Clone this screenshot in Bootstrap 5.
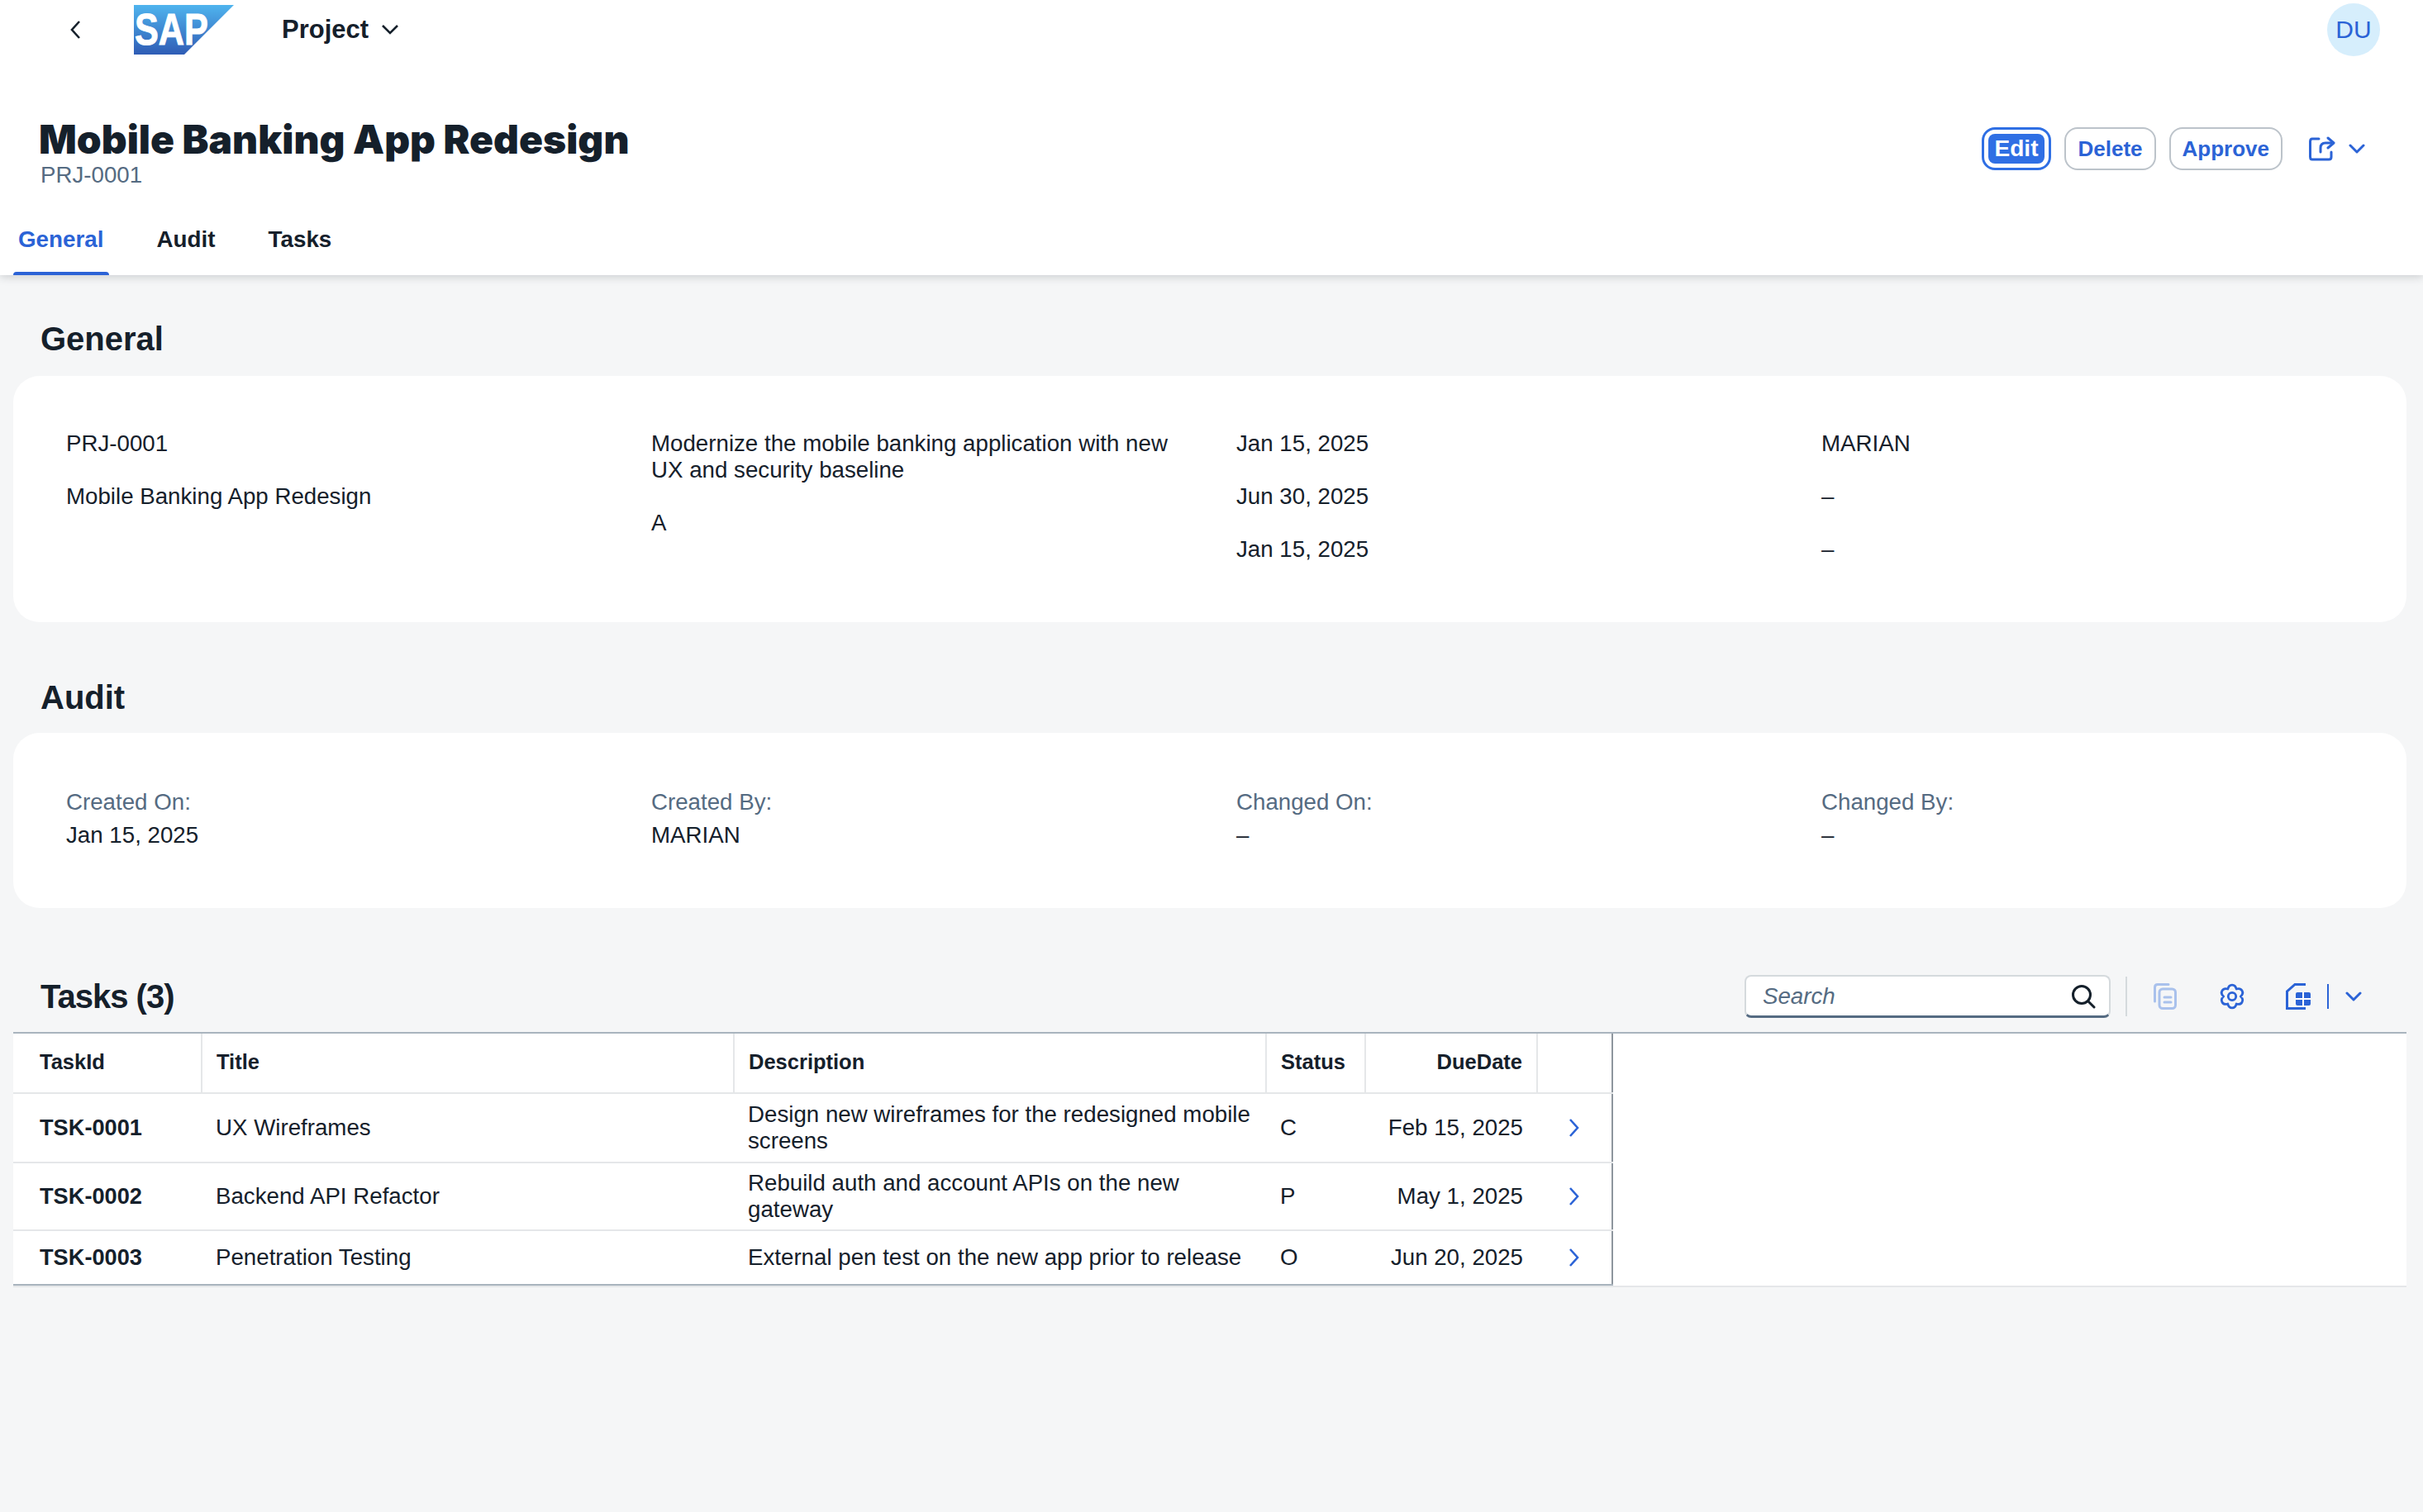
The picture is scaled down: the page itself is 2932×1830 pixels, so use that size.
<!DOCTYPE html>
<html lang="en">
<head>
    <meta charset="UTF-8">
    <title>Mobile Banking App Redesign</title>
    <link rel="stylesheet" href="https://cdn.jsdelivr.net/npm/bootstrap@5.3.3/dist/css/bootstrap.min.css">
    <style>
        body { background: #f5f6f7; color: #15202b; font-family: "Liberation Sans", Arial, sans-serif; font-size: 27.7px; line-height: 32px; min-height: 1830px; }
        .page-head { background: #fff; height: 333px; box-shadow: 0 2px 10px rgba(50,60,70,.22); position: relative; }
        .top-bar { height: 74px; padding: 4px 52px 6px 82px; }
        .sap-logo { margin-left: 56px; }
        .app-name { font-weight: 700; font-size: 31px; margin-left: 57px; }
        .avatar { width: 64px; height: 64px; border-radius: 50%; background: #d6eefc; color: #2b63d6; text-align: center; line-height: 64px; font-size: 30px; }
        .title-row { height: 200px; padding: 0 70px 0 47px; }
        .big-title { font-family: Inter, sans-serif; font-weight: 900; font-size: 47.9px; line-height: 56px; margin: 0; padding-top: 67px; }
        .sub-id { color: #556b82; line-height: 32px; margin-top: -1px; margin-left: 2px; }
        .act-wrap { margin-top: 80px; }
        .act-btn { height: 52px; border: 2px solid #bcc3ca; border-radius: 16px; background: #fff; color: #2b63d6; font-weight: 700; font-size: 26px; line-height: 32px; padding: 0 14px; }
        .act-btn:hover { color: #2b63d6; background: #fff; border-color: #bcc3ca; }
        .act-focus { border: 3px solid #2f6fe4; padding: 5px; }
        .act-focus:hover { border-color: #2f6fe4; }
        .act-focus span { display: block; background: #2f6fe4; color: #fff; border-radius: 8px; font-size: 28px; line-height: 36px; padding: 0 8px; }
        .page-tabs { padding-left: 16px; height: 59px; }
        .page-tabs .nav-link { color: #15202b; font-weight: 700; font-size: 27.8px; padding: 0 6px; height: 59px; line-height: 32px; margin-right: 52px; position: relative; }
        .page-tabs .nav-link.active { color: #2b63d6; }
        .page-tabs .nav-link.active::after { content: ""; position: absolute; left: 0; right: 0; bottom: 0; height: 4px; background: #2b63d6; border-radius: 4px 4px 0 0; }
        .page-body { padding: 53px 20px 0 16px; }
        .sect-title { font-weight: 700; font-size: 40px; line-height: 48px; margin: 0 0 21px 33px; }
        .audit-title { margin-top: 67px; margin-bottom: 19px; }
        .count-title { letter-spacing: -1px; }
        .info-card { background: #fff; border: 0; border-radius: 32px; padding: 66px 0 72px 64px; }
        .audit-card { padding-top: 68px; }
        .info-col { display: flex; flex-direction: column; gap: 32px; padding-right: 60px; }
        .info-label { color: #556b82; margin-bottom: 8px; }
        .tasks-bar { margin-top: 81px; height: 52px; margin-bottom: 17px; padding-right: 54px; }
        .search-box { width: 443px; height: 52px; background: #fff; border: 2px solid #d5dadd; border-bottom: 3px solid #556b82; border-radius: 8px; padding: 0 16px 0 20px; }
        .search-box span { color: #556b82; font-style: italic; }
        .tb-sep { width: 2px; height: 48px; background: #d5dadd; margin: 0 32px 0 18px; }
        .tb-gap { margin-left: 51px; }
        .tb-gap2 { margin-left: 49px; }
        .tb-line { width: 2px; height: 30px; background: #2b63d6; margin: 0 20px 0 20px; }
        .table-wrap { background: #fff; border-top: 2px solid #a9b4be; border-bottom: 2px solid #e5e7e9; }
        .task-table { table-layout: fixed; width: 1935px; margin: 0; border-collapse: collapse; color: #15202b; border-right: 2px solid #8e969e; border-bottom: 2px solid #a9b4be; }
        .task-table > :not(caption) > * > * { padding: 0 17px; border-bottom: 2px solid #e5e7e9; vertical-align: middle; box-shadow: none; }
        .task-table thead th { height: 72px; padding-bottom: 3px; font-weight: 700; font-size: 25.5px; border-right: 2px solid #e5e7e9; }
        .task-table thead th:last-child { border-right: 2px solid #8e969e; }
        .task-table tbody tr:last-child td { border-bottom: 0; }
        .task-table .first-col { padding-left: 32px; }
        .task-table td.desc-col { padding-right: 8px; }
        .task-table td.id-col { font-size: 27.2px; font-weight: 700; }
        .task-table svg { display: block; margin: 0 auto; }
        .row-a { height: 84px; }
        .row-b { height: 82px; }
        .row-low { height: 66px; }
    </style>
</head>
<body>
    <header class="page-head">
        <div class="top-bar d-flex align-items-center">
            <svg width="24" height="24" viewBox="0 0 24 24" fill="none" stroke="#15202b" stroke-width="2.6"><path d="M14 2 L5 12 L14 22"/></svg>
            <svg class="sap-logo" width="122" height="62" viewBox="0 0 122 62">
                <defs><linearGradient id="sapg" x1="0" y1="0" x2="0" y2="1"><stop offset="0" stop-color="#4fb4ee"/><stop offset="1" stop-color="#2f5cb5"/></linearGradient></defs>
                <polygon points="0,1 121,1 61,61 0,61" fill="url(#sapg)"/>
                <text x="1" y="49" font-family="Liberation Sans" font-weight="700" font-size="53" fill="#fff" stroke="#fff" stroke-width="1" textLength="89" lengthAdjust="spacingAndGlyphs">SAP</text>
            </svg>
            <span class="app-name">Project</span>
            <svg class="ms-3" width="20" height="12" viewBox="0 0 20 12" fill="none" stroke="#15202b" stroke-width="2.6"><path d="M1 1 L10 10 L19 1"/></svg>
            <div class="avatar ms-auto">DU</div>
        </div>
        <div class="title-row d-flex justify-content-between align-items-start">
            <div>
                <h1 class="big-title">Mobile Banking App Redesign</h1>
                <div class="sub-id">PRJ-0001</div>
            </div>
            <div class="act-wrap d-flex align-items-center gap-3">
                <button class="btn act-btn act-focus"><span>Edit</span></button>
                <button class="btn act-btn">Delete</button>
                <button class="btn act-btn">Approve</button>
                <svg class="ms-3" width="32" height="30" viewBox="0 0 32 30" fill="none" stroke="#2b63d6" stroke-width="3" stroke-linecap="round" stroke-linejoin="round"><path d="M12 3 H4 Q1.5 3 1.5 6 V25 Q1.5 28 4 28 H24 Q27 28 27 25 V19"/><path d="M14 19 V14 Q14 8 20 8 H29"/><path d="M23 2 L30 8 L23 14"/></svg>
                <svg width="20" height="12" viewBox="0 0 20 12" fill="none" stroke="#2b63d6" stroke-width="3" stroke-linecap="round" stroke-linejoin="round"><path d="M2 2 L10 10 L18 2"/></svg>
            </div>
        </div>
        <ul class="nav page-tabs">
            <li class="nav-item"><a class="nav-link active" href="#">General</a></li>
            <li class="nav-item"><a class="nav-link" href="#">Audit</a></li>
            <li class="nav-item"><a class="nav-link" href="#">Tasks</a></li>
        </ul>
    </header>
    <main class="page-body">
        <h2 class="sect-title">General</h2>
        <div class="card info-card">
            <div class="row g-0">
                <div class="col-3 info-col"><div>PRJ-0001</div><div>Mobile Banking App Redesign</div></div>
                <div class="col-3 info-col"><div>Modernize the mobile banking application with new UX and security baseline</div><div>A</div></div>
                <div class="col-3 info-col"><div>Jan 15, 2025</div><div>Jun 30, 2025</div><div>Jan 15, 2025</div></div>
                <div class="col-3 info-col"><div>MARIAN</div><div>–</div><div>–</div></div>
            </div>
        </div>
        <h2 class="sect-title audit-title">Audit</h2>
        <div class="card info-card audit-card">
            <div class="row g-0">
                <div class="col-3"><div class="info-label">Created On:</div><div>Jan 15, 2025</div></div>
                <div class="col-3"><div class="info-label">Created By:</div><div>MARIAN</div></div>
                <div class="col-3"><div class="info-label">Changed On:</div><div>–</div></div>
                <div class="col-3"><div class="info-label">Changed By:</div><div>–</div></div>
            </div>
        </div>
        <div class="tasks-bar d-flex align-items-center">
            <h2 class="sect-title count-title mb-0 me-auto">Tasks (3)</h2>
            <div class="search-box d-flex align-items-center justify-content-between">
                <span>Search</span>
                <svg width="30" height="30" viewBox="0 0 30 30" fill="none" stroke="#15202b" stroke-width="3" stroke-linecap="round"><circle cx="13" cy="13" r="10.5"/><path d="M21 21 L28 28"/></svg>
            </div>
            <div class="tb-sep"></div>
            <svg width="28" height="32" viewBox="0 0 28 32" fill="none" stroke="#a9c1ec" stroke-width="3" stroke-linecap="round" stroke-linejoin="round"><path d="M18 1.5 H5 Q1.5 1.5 1.5 5 V22"/><rect x="7" y="7" width="19.5" height="23.5" rx="4"/><path d="M13 17 H21 M13 23 H21"/></svg>
            <svg class="tb-gap" width="32" height="32" viewBox="-1 -1 34 34" fill="none" stroke="#2b63d6" stroke-width="3" stroke-linejoin="round"><circle cx="16" cy="16" r="5"/><path d="M10.5 6.47 C12 -.5 20 -.5 21.5 6.47 C28.29 4.29 32.29 11.21 27 16 C32.29 20.79 28.29 27.71 21.5 25.53 C20 32.5 12 32.5 10.5 25.53 C3.71 27.71 -.29 20.79 5 16 C-.29 11.21 3.71 4.29 10.5 6.47 Z"/></svg>
            <svg class="tb-gap2" width="30" height="32" viewBox="0 0 30 32" fill="none"><path d="M24 1.5 H11 L1.5 10 V30.5 H24" stroke="#2b63d6" stroke-width="3"/><rect x="12" y="11" width="18" height="16" rx="2" fill="#2b63d6"/><path d="M21 11 V27 M12 19 H30" stroke="#fff" stroke-width="2"/></svg>
            <div class="tb-line"></div>
            <svg width="20" height="12" viewBox="0 0 20 12" fill="none" stroke="#2b63d6" stroke-width="3" stroke-linecap="round" stroke-linejoin="round"><path d="M2 2 L10 10 L18 2"/></svg>
        </div>
        <div class="table-wrap">
            <table class="table task-table">
                <colgroup><col style="width:228px"><col style="width:644px"><col style="width:644px"><col style="width:120px"><col style="width:208px"><col style="width:91px"></colgroup>
                <thead>
                    <tr><th class="first-col">TaskId</th><th>Title</th><th>Description</th><th>Status</th><th class="text-end">DueDate</th><th></th></tr>
                </thead>
                <tbody>
                    <tr class="row-a"><td class="first-col id-col">TSK-0001</td><td>UX Wireframes</td><td class="desc-col">Design new wireframes for the redesigned mobile screens</td><td>C</td><td class="text-end">Feb 15, 2025</td><td><svg width="14" height="22" viewBox="0 0 14 22" fill="none" stroke="#2b63d6" stroke-width="2.6"><path d="M2 1 L11 11 L2 21"/></svg></td></tr>
                    <tr class="row-b"><td class="first-col id-col">TSK-0002</td><td>Backend API Refactor</td><td class="desc-col">Rebuild auth and account APIs on the new gateway</td><td>P</td><td class="text-end">May 1, 2025</td><td><svg width="14" height="22" viewBox="0 0 14 22" fill="none" stroke="#2b63d6" stroke-width="2.6"><path d="M2 1 L11 11 L2 21"/></svg></td></tr>
                    <tr class="row-low"><td class="first-col id-col">TSK-0003</td><td>Penetration Testing</td><td class="desc-col">External pen test on the new app prior to release</td><td>O</td><td class="text-end">Jun 20, 2025</td><td><svg width="14" height="22" viewBox="0 0 14 22" fill="none" stroke="#2b63d6" stroke-width="2.6"><path d="M2 1 L11 11 L2 21"/></svg></td></tr>
                </tbody>
            </table>
        </div>
    </main>
    <script src="https://cdn.jsdelivr.net/npm/bootstrap@5.3.3/dist/js/bootstrap.bundle.min.js"></script>
</body>
</html>
